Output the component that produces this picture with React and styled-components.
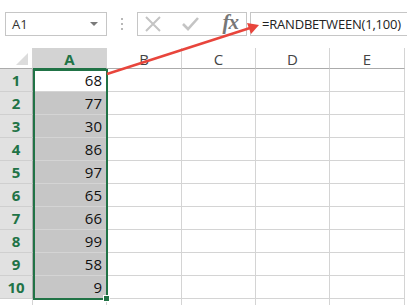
import styled, { createGlobalStyle } from "styled-components";

const GlobalStyle = createGlobalStyle`
  html, body {
    margin: 0;
    padding: 0;
    background: #ffffff;
    overflow: hidden;
  }
`;

const values = [68, 77, 30, 86, 97, 65, 66, 99, 58, 9];
const columns = ["B", "C", "D", "E"];
const colWidths = [74, 75, 74, 74, 75];

const Sheet = styled.div`
  position: relative;
  width: 407px;
  height: 305px;
  font-family: "Open Sans", "Liberation Sans", sans-serif;
`;

const Toolbar = styled.div`
  display: flex;
  align-items: center;
  height: 24px;
  padding: 12px 0 0 5px;
`;

const NameBox = styled.div`
  box-sizing: border-box;
  width: 102px;
  height: 24px;
  border: 1px solid #c6c6c6;
  display: flex;
  align-items: center;
  justify-content: space-between;
  padding: 0 8px 0 6px;
  font-size: 13px;
  color: #333;
`;

const Caret = styled.span`
  width: 0;
  height: 0;
  border-left: 4px solid transparent;
  border-right: 4px solid transparent;
  border-top: 4px solid #7a7a7a;
`;

const Dots = styled.div`
  width: 30px;
  display: flex;
  flex-direction: column;
  align-items: center;
  gap: 3px;

  span {
    width: 2px;
    height: 2px;
    background: #b8b8b8;
  }
`;

const ButtonBox = styled.div`
  box-sizing: border-box;
  width: 110px;
  height: 24px;
  border: 1px solid #c6c6c6;
  display: flex;
  align-items: center;
  padding: 0 6px;
  gap: 20px;
`;

const Fx = styled.span`
  font-family: "Liberation Serif", "DejaVu Serif", serif;
  font-style: italic;
  font-weight: bold;
  font-size: 21px;
  color: #777;
  margin-left: auto;
  margin-right: 2px;
  margin-top: -4px;
  letter-spacing: -1px;
`;

const FormulaBox = styled.div`
  box-sizing: border-box;
  flex: 1;
  height: 24px;
  margin-left: 3px;
  border: 1px solid #c6c6c6;
  border-right: none;
  display: flex;
  align-items: center;
  padding-left: 11px;
  font-size: 13px;
  color: #222;
  letter-spacing: -0.2px;
`;

const Grid = styled.div`
  display: grid;
  grid-template-columns: 33px ${colWidths.map((w) => `${w}px`).join(" ")} 1fr;
  grid-template-rows: 21px repeat(10, 23px) 1fr;
  margin-top: 12px;
  height: 257px;
`;

const Corner = styled.div`
  position: relative;
  background: #ffffff;
  border-right: 1px solid #d4d4d4;
  border-bottom: 1px solid #ababab;

  &::after {
    content: "";
    position: absolute;
    right: 4px;
    bottom: 3px;
    width: 0;
    height: 0;
    border-left: 12px solid transparent;
    border-bottom: 12px solid #dcdcdc;
  }
`;

const ColHead = styled.div`
  box-sizing: border-box;
  display: flex;
  align-items: center;
  justify-content: center;
  font-size: 15px;
  font-weight: ${(p) => (p.$active ? 700 : 400)};
  color: ${(p) => (p.$active ? "#217346" : "#444")};
  background: ${(p) => (p.$active ? "#d3d3d3" : "#ffffff")};
  border-right: 1px solid #d4d4d4;
  border-bottom: 1px solid ${(p) => (p.$active ? "#217346" : "#ababab")};
  padding-top: 1px;
`;

const RowHead = styled.div`
  box-sizing: border-box;
  display: flex;
  align-items: center;
  justify-content: center;
  font-size: 15px;
  font-weight: 700;
  color: #217346;
  background: #e1e1e1;
  border-right: 1px solid #ababab;
  border-bottom: 1px solid #cfcfcf;
`;

const Cell = styled.div`
  box-sizing: border-box;
  display: flex;
  align-items: center;
  justify-content: flex-end;
  padding-right: 4px;
  font-size: 15px;
  color: #111;
  background: ${(p) => (p.$selected ? "#c6c6c6" : "#ffffff")};
  border-right: 1px solid #d4d4d4;
  border-bottom: 1px solid #d4d4d4;
`;

const Filler = styled.div`
  background: ${(p) => (p.$head ? "#ffffff" : "transparent")};
  border-right: ${(p) => (p.$line ? "1px solid #d4d4d4" : "none")};
`;

const Selection = styled.div`
  position: absolute;
  left: 33px;
  top: 69px;
  width: 75px;
  height: 231px;
  box-sizing: border-box;
  border: 2px solid #217346;
  pointer-events: none;
`;

const Handle = styled.div`
  position: absolute;
  right: -4px;
  bottom: -4px;
  width: 5px;
  height: 5px;
  background: #217346;
  border: 1px solid #ffffff;
`;

const Overlay = styled.svg`
  position: absolute;
  left: 0;
  top: 0;
  pointer-events: none;
`;

export default function App() {
  return (
    <>
      <GlobalStyle />
      <Sheet>
        <Toolbar>
          <NameBox>
            <span>A1</span>
            <Caret />
          </NameBox>
          <Dots>
            <span />
            <span />
            <span />
          </Dots>
          <ButtonBox>
            <svg width="18" height="16" viewBox="0 0 18 16">
              <path d="M2 1 L16 15 M16 1 L2 15" stroke="#c4c4c4" strokeWidth="2" fill="none" />
            </svg>
            <svg width="17" height="14" viewBox="0 0 17 14">
              <path d="M1 7 L6 12 L16 1" stroke="#c4c4c4" strokeWidth="2.6" fill="none" />
            </svg>
            <Fx>fx</Fx>
          </ButtonBox>
          <FormulaBox>=RANDBETWEEN(1,100)</FormulaBox>
        </Toolbar>

        <Grid>
          <Corner />
          <ColHead $active>A</ColHead>
          {columns.map((c) => (
            <ColHead key={c}>{c}</ColHead>
          ))}
          <Filler $head />
          {values.map((v, i) => (
            <Row key={i} n={i + 1} value={v} />
          ))}
          <Filler $line />
          <Filler $line />
          {columns.map((c) => (
            <Filler key={c} $line />
          ))}
          <Filler />
        </Grid>

        <Selection>
          <Handle />
        </Selection>

        <Overlay width="407" height="305">
          <line x1="107" y1="74" x2="250" y2="28" stroke="#e8453c" strokeWidth="2.5" />
          <polygon points="259,25 247,23 251,34" fill="#e8453c" />
        </Overlay>
      </Sheet>
    </>
  );
}

function Row({ n, value }) {
  return (
    <>
      <RowHead>{n}</RowHead>
      <Cell $selected={n !== 1}>{value}</Cell>
      {columns.map((c) => (
        <Cell key={c} />
      ))}
      <Filler />
    </>
  );
}
